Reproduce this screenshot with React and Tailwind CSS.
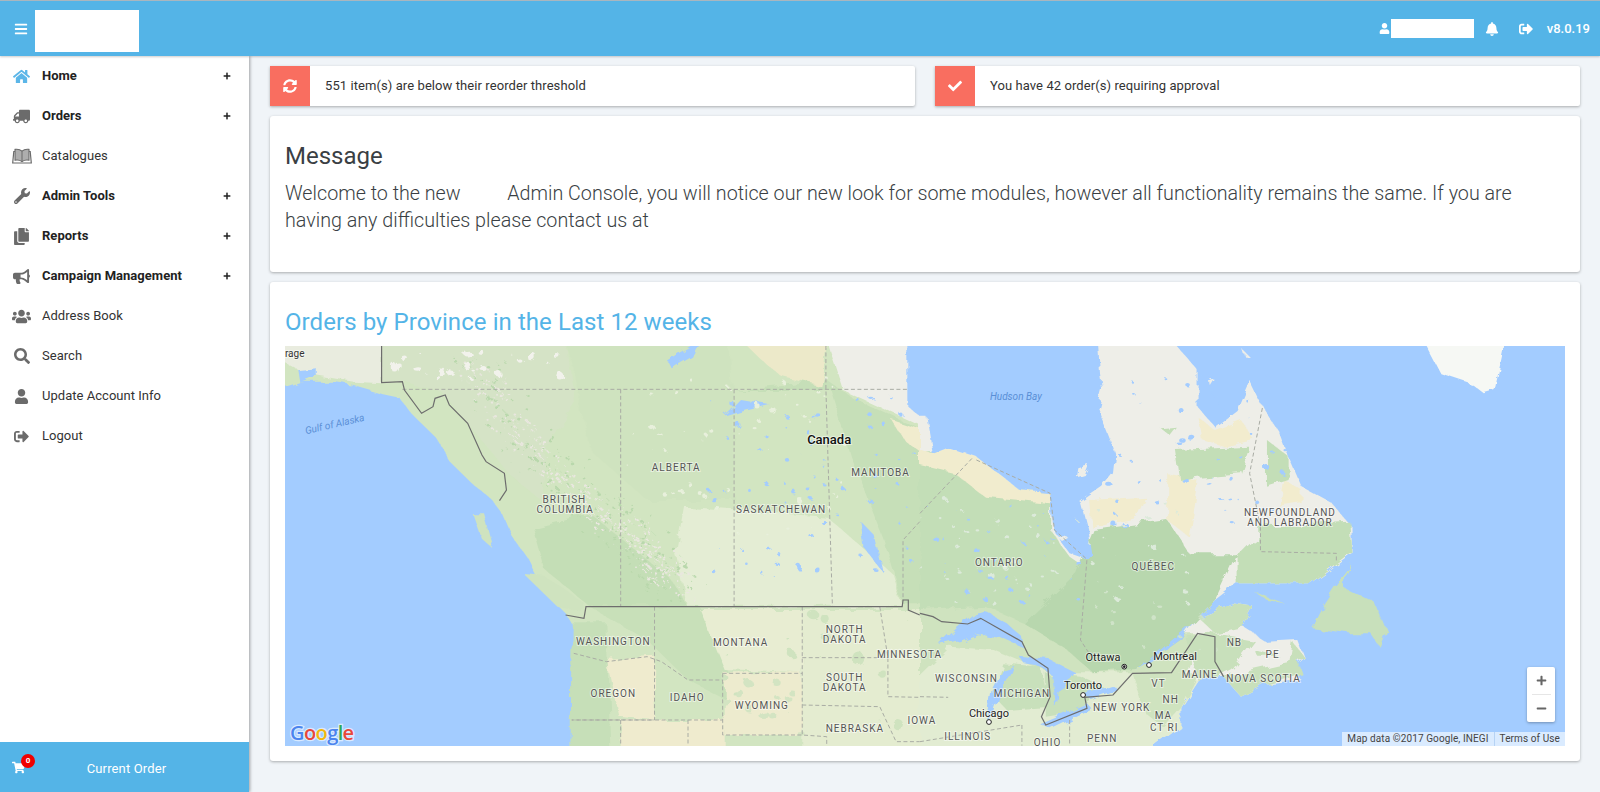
import React from 'react';
import { FaBars, FaHome, FaTruck, FaWrench, FaCopy, FaBullhorn, FaUsers, FaSearch, FaUser, FaSignOutAlt, FaSyncAlt, FaCheck, FaBell, FaShoppingCart, FaPlus, FaMinus } from 'react-icons/fa';

function BookIcon({ className }) {
  return (
    <svg viewBox="0 0 20 16" className={className} width="20" height="16" fill="none" stroke="currentColor">
      <path d="M10 3.2C8.2 1.6 5.6 1 3 1.4V12.2C5.6 11.8 8.2 12.2 10 13.6C11.8 12.2 14.4 11.8 17 12.2V1.4C14.4 1 11.8 1.6 10 3.2Z" fill="currentColor" fillOpacity="0.55" strokeWidth="1.1" />
      <path d="M10 3.2V13.6" strokeWidth="1" />
      <path d="M3 3.5H1.8L0.7 15H19.3L18.2 3.5H17" strokeWidth="1.2" />
    </svg>
  );
}

const nav = [
  { t: 'Home', I: FaHome, b: 1, c: 'text-[#5cb6e8]', s: 'text-[17px]' },
  { t: 'Orders', I: FaTruck, b: 1, flip: 1, s: 'text-[17px]' },
  { t: 'Catalogues', I: BookIcon, s: '' },
  { t: 'Admin Tools', I: FaWrench, b: 1, s: 'text-[16px]' },
  { t: 'Reports', I: FaCopy, b: 1, s: 'text-[17px]' },
  { t: 'Campaign Management', I: FaBullhorn, b: 1, s: 'text-[17px]' },
  { t: 'Address Book', I: FaUsers, s: 'text-[19px]' },
  { t: 'Search', I: FaSearch, s: 'text-[16px]' },
  { t: 'Update Account Info', I: FaUser, s: 'text-[15px]' },
  { t: 'Logout', I: FaSignOutAlt, s: 'text-[15px]' },
];

const WATER = '#a3ccff';
const W = (x, y) => [280 + x * 0.408, 340 + y / 3];
const E = (x, y) => [920 + x * 0.4337, 340 + y / 3];
const WT = 'translate(280 340) scale(0.408 0.33333)';
const ET = 'translate(920 340) scale(0.4337 0.33333)';

function specks(seed, n, x0, y0, x1, y1, fill, rMax) {
  let s = seed;
  const r = () => { s = (s * 16807) % 2147483647; return s / 2147483647; };
  const out = [];
  for (let i = 0; i < n; i++) {
    const rx = 1.5 + r() * rMax;
    out.push(<ellipse key={i} cx={x0 + r() * (x1 - x0)} cy={y0 + r() * (y1 - y0)} rx={rx} ry={rx * (0.5 + r())} fill={fill} />);
  }
  return out;
}

function along(seed, n, pts, spread, fill, rMax) {
  let s = seed;
  const r = () => { s = (s * 16807) % 2147483647; return s / 2147483647; };
  const out = [];
  for (let i = 0; i < n; i++) {
    const t = r() * (pts.length - 1);
    const k = Math.floor(t), f = t - k;
    const x = pts[k][0] + (pts[k + 1][0] - pts[k][0]) * f + (r() - 0.5) * spread;
    const y = pts[k][1] + (pts[k + 1][1] - pts[k][1]) * f + (r() - 0.5) * spread;
    out.push(<circle key={i} cx={x} cy={y} r={1 + r() * rMax} fill={fill} />);
  }
  return out;
}

const rockies = [[470, 90], [620, 330], [780, 500], [900, 620], [980, 740]];

function Label({ m, x, y, children, size = 10, ls = 1, anchor = 'middle', fill = '#555', weight = 400 }) {
  const [px, py] = m(x, y);
  return (
    <text x={px} y={py} fontSize={size} letterSpacing={ls} textAnchor={anchor} dominantBaseline="central" fill={fill} fontWeight={weight}
      fontFamily="Roboto, sans-serif" stroke="#ffffff" strokeOpacity="0.5" strokeWidth={2} paintOrder="stroke">
      {children}
    </text>
  );
}

function MapArt() {
  const vs = { vectorEffect: 'non-scaling-stroke' };
  const P = (p) => <polyline points={p} {...vs} />;
  const [gx, gy] = W(134, 252);
  return (
    <svg viewBox="285 346 1280 400" className="block w-full h-full">
      <defs>
        <filter id="rough" x="-5%" y="-5%" width="110%" height="110%">
          <feTurbulence type="fractalNoise" baseFrequency="0.06" numOctaves="4" seed="4" />
          <feDisplacementMap in="SourceGraphic" scale="10" />
          <feGaussianBlur stdDeviation="0.5" />
        </filter>
      </defs>
      <rect x="285" y="346" width="1280" height="400" fill={WATER} />
      <g filter="url(#rough)">
        <g transform={WT}>
          <polygon fill="#d2e5c1" points="0,0 1575,0 1575,1240 712,1240 715,1100 715,1000 720,930 720,860 700,820 650,760 610,660 570,590 545,520 520,480 470,430 420,370 380,290 330,230 290,170 250,160 180,135 130,125 60,125 0,150" />
          <polygon fill="#e9ecdf" points="0,0 249,0 249,130 180,125 60,100 0,60" />
          <polygon fill="#d5e3c6" points="249,0 700,0 720,200 650,330 640,480 560,400 460,250 400,160 300,125 249,128" />
          <polygon fill="#cfe3bf" points="700,0 1100,0 1110,150 1113,480 900,480 760,330" />
          <polygon fill="#e4edd4" points="990,500 1340,530 1500,700 1525,800 1000,800 970,640" />
          <polygon fill="#c6dfb8" points="1113,150 1350,150 1400,350 1480,600 1525,790 1575,790 1575,270 1400,170 1340,120" />
          <polygon fill="#ece9c9" points="1130,0 1340,0 1330,140 1230,110 1180,60" />
          <polygon fill="#eeeee8" points="1340,0 1575,0 1575,260 1470,200 1380,150" />
          <polygon fill="#f1ecce" points="1500,240 1575,270 1575,340 1530,300" />
          <polygon fill="#c4deb6" points="620,560 760,520 960,720 1000,800 760,800 650,690" />
          <polygon fill="#c8e0b9" points="760,800 1030,800 1100,1000 1130,1100 1000,1020 900,900" />
          <polygon fill="#e8edd2" points="1030,810 1280,810 1280,1000 1090,990" />
          <polygon fill="#efebce" points="800,960 920,950 918,1140 830,1130" />
          <polygon fill="#edebce" points="1090,1000 1280,1000 1280,1185 1090,1185" />
          <polygon fill="#efebce" points="835,1140 1090,1140 1090,1240 835,1240" />
          <polygon fill="#e4ecd0" points="1280,810 1575,810 1575,1240 1280,1240" />
          <polygon fill="#c6dfb8" points="715,850 800,850 810,1240 712,1240" />
          <polygon fill="#cfe3bf" points="470,520 500,520 525,630 490,590" />
          <polygon fill="#cfe3bf" points="600,705 650,710 745,790 740,815 680,800" />
          <polygon fill={WATER} points="950,60 1030,0 1010,50 960,85" />
          <polygon fill={WATER} points="1090,230 1130,180 1200,195 1130,215" />
          <polygon fill={WATER} points="1420,540 1460,590 1480,700 1430,620" />
          <polygon fill={WATER} points="45,90 90,85 90,110 50,130" />
          <polygon fill={WATER} points="1540,0 1575,0 1575,235 1540,200" />
          {along(31, 420, rockies, 90, '#e9e7df', 2.8)}
          {along(77, 240, rockies, 130, '#b9d8ac', 3.4)}
          {specks(11, 70, 1050, 170, 1560, 720, WATER, 5)}
          {specks(29, 50, 850, 100, 1400, 600, '#e8f0dc', 6)}
          {specks(41, 30, 280, 30, 700, 120, '#f2f2ec', 8)}
          {specks(53, 16, 1050, 820, 1550, 1200, '#cfe3bf', 14)}
          {specks(67, 12, 1090, 1000, 1280, 1185, '#d3e4c2', 12)}
        </g>
        <g transform={ET}>
          <polygon fill="#eeeee8" points="0,0 415,0 580,0 640,90 640,200 680,260 730,210 760,120 790,200 830,280 850,350 880,440 950,490 995,560 995,640 900,730 730,730 680,780 620,860 600,900 640,830 720,790 770,800 745,860 800,905 870,900 885,950 850,990 880,1020 800,1030 740,1070 700,1010 640,1020 600,1100 600,1160 520,1240 0,1240" />
          <polygon fill="#c3deb7" points="0,340 40,340 130,360 230,450 300,460 300,570 345,650 400,700 370,1000 290,950 235,890 140,810 0,820" />
          <polygon fill="#f1ecce" points="0,330 30,345 70,325 130,350 230,450 300,460 300,490 230,480 150,470 80,400 0,375" />
          <polygon fill="#cfe3bf" points="0,810 150,800 240,850 400,960 420,1020 0,1020" />
          <polygon fill="#cfe3bf" points="340,920 610,880 640,880 610,1010 400,1010" />
          <polygon fill="#b8d7ae" points="240,850 360,700 400,570 570,540 620,640 730,640 680,780 620,860 600,900 500,990 400,1000 340,930" />
          <polygon fill="#c3deb7" points="730,640 760,600 990,640 900,730 730,730" />
          <polygon fill="#c3deb7" points="780,560 990,545 995,640 780,640" />
          <polygon fill="#f2ecce" points="570,400 640,420 620,590 570,540" />
          <polygon fill="#f2ecce" points="840,420 880,450 880,490 830,500" />
          <polygon fill="#f2ecce" points="640,230 680,270 740,240 770,300 700,320 650,300" />
          <polygon fill="#f2ecce" points="390,480 520,470 500,530 395,560" />
          <polygon fill="#c3deb7" points="590,330 760,320 740,400 640,410 600,420" />
          <polygon fill="#c3deb7" points="800,300 850,350 850,420 800,440" />
          <polygon fill="#c3deb7" points="555,265 590,260 575,285" />
          <polygon fill="#e2ecd2" points="0,1010 70,920 170,930 300,1000 370,1000 490,1000 600,1000 640,1020 600,1100 600,1160 520,1240 0,1240" />
          <polygon fill="#c8e0bb" points="190,970 280,980 300,1100 200,1110 165,1060" />
          <polygon fill="#c8e0bb" points="290,1000 370,1010 440,1050 340,1120 290,1130" />
          <polygon fill="#cfe3bf" points="490,1000 640,1000 600,1100 560,1160 520,1120" />
          <polygon fill="#c8e0bb" points="610,890 680,880 770,900 720,990 690,1010 640,1020" />
          <polygon fill="#c8e0bb" points="640,830 720,790 770,800 745,860 680,880" />
          <polygon fill="#c8e0bb" points="700,1010 870,960 880,1000 800,1030 740,1070" />
          <polygon fill={WATER} points="0,0 410,0 415,100 420,150 410,200 440,300 450,340 445,400 420,440 370,485 385,560 395,640 385,658 345,640 305,570 300,460 230,450 130,350 70,325 30,345 15,230 0,230" />
          <polygon fill="#eeeee8" points="365,385 390,375 380,405 362,412" />
          <polygon fill="#eeeee8" points="305,575 340,590 325,600" />
          <polygon fill={WATER} points="45,915 80,870 120,825 150,815 200,850 235,890 240,925 180,890 130,880 90,900" />
          <polygon fill={WATER} points="155,1140 165,1050 190,985 215,975 195,1040 170,1130" />
          <polygon fill={WATER} points="230,950 300,960 360,1000 350,1020 315,1050 310,1100 300,1000 265,975 240,970" />
          <polygon fill={WATER} points="275,1150 385,1090 395,1105 300,1165" />
          <polygon fill={WATER} points="375,1060 440,1035 460,1050 395,1080" />
          <polygon fill={WATER} points="620,860 600,900 520,975 500,990 590,890" />
          <polygon fill="#c8e0bb" points="960,740 1000,665 975,740 1050,790 1075,870 1060,920 1040,880 990,880 905,865 930,800" />
          <polygon fill="#c8e0bb" points="770,755 840,790 800,780" />
          <polygon fill="#c8e0bb" points="770,930 830,950 780,950" />
          <polygon fill="#c8e0bb" points="860,905 885,950 850,975" />
          <polygon fill="#eeeee8" points="745,30 760,50 750,50" />
          <polygon fill="#eeeee8" points="665,110 678,115 668,135" />
          <polygon fill="#f6f8f4" points="1160,0 1350,0 1325,150 1300,160 1270,130 1200,100" />
          {specks(13, 50, 400, 100, 870, 560, WATER, 6)}
          {specks(37, 60, 0, 480, 620, 800, '#dceada', 5)}
          {specks(59, 30, 0, 440, 380, 800, WATER, 5)}
          {specks(61, 14, 400, 700, 720, 950, '#cfe3c8', 5)}
        </g>
      </g>
      <g transform={WT} fill="none" stroke="#a9aca4" strokeWidth="1" strokeDasharray="4 2.5">
        {P('300,148 1540,148')}
        {P('835,148 835,800')}
        {P('1113,148 1113,800')}
        {P('1338,18 1338,148 1354,800')}
        {P('1568,545 1527,600 1527,780')}
        {P('918,800 918,1140 715,1140 1085,1140')}
        {P('1085,1000 1280,1000')}
        {P('1085,1000 1085,1185 1280,1185 1340,1190 1340,1217')}
        {P('1280,800 1280,1185')}
        {P('1280,953 1490,953')}
        {P('1470,800 1490,953 1490,1070 1568,1072')}
        {P('1280,1095 1470,1100 1510,1205 1568,1205')}
        {P('835,1140 835,1217')}
        {P('1000,1140 1000,1217')}
        {P('720,940 800,965 900,950 935,965 1000,1020 1085,1020')}
      </g>
      <g transform={ET} fill="none" stroke="#a9aca4" strokeWidth="1" strokeDasharray="4 2.5">
        {P('0,520 120,355')}
        {P('130,360 300,460 310,570 385,658 370,900 395,950')}
        {P('785,560 785,635 960,640 960,665')}
        {P('785,560 760,400 790,200')}
        {P('0,1070 65,1072')}
        {P('235,1155 235,1217')}
        {P('345,1140 345,1217')}
        {P('0,1205 235,1155')}
      </g>
      <g transform={WT} fill="none" stroke="#6d6d6d" strokeWidth="1.2">
        {P('249,18 249,128 300,125 305,150 347,220 375,200 380,175 405,165 415,195 460,250 495,345 505,365 550,400 555,450 538,482')}
        {P('700,825 745,835 750,800 1525,800 1527,780 1540,780 1540,810 1568,825')}
      </g>
      <g transform={ET} fill="none" stroke="#6d6d6d" strokeWidth="1.2">
        {P('0,820 30,830 50,845 110,852 140,835 235,905 250,945 295,985 300,1070 280,1130 290,1155 385,1105 380,1072 445,1065 490,1000 580,998 640,880 680,890 680,965 700,1010')}
      </g>
      <Label m={W} x={36} y={40} ls={0} fill="#333">rage</Label>
      <text x={gx} y={gy} fontSize={10} fontStyle="italic" fill="#5a8fd6" fontFamily="Roboto, sans-serif" textAnchor="middle" dominantBaseline="central" transform={`rotate(-13 ${gx} ${gy})`}>Gulf of Alaska</text>
      <Label m={W} x={971} y={381}>ALBERTA</Label>
      <Label m={W} x={1472} y={396}>MANITOBA</Label>
      <Label m={W} x={1228} y={507}>SASKATCHEWAN</Label>
      <Label m={W} x={697} y={477}>BRITISH</Label>
      <Label m={W} x={699} y={507}>COLUMBIA</Label>
      <Label m={W} x={817} y={903}>WASHINGTON</Label>
      <Label m={W} x={1129} y={906}>MONTANA</Label>
      <Label m={W} x={1384} y={867}>NORTH</Label>
      <Label m={W} x={1384} y={897}>DAKOTA</Label>
      <Label m={W} x={1463} y={942} anchor="start">MINNESOTA</Label>
      <Label m={W} x={1384} y={1011}>SOUTH</Label>
      <Label m={W} x={1384} y={1041}>DAKOTA</Label>
      <Label m={W} x={817} y={1059}>OREGON</Label>
      <Label m={W} x={998} y={1071}>IDAHO</Label>
      <Label m={W} x={1181} y={1095}>WYOMING</Label>
      <Label m={W} x={1409} y={1164}>NEBRASKA</Label>
      <Label m={W} x={1538} y={1141} anchor="start">IOWA</Label>
      <Label m={W} x={1346} y={298} size={13} ls={0} fill="#111" weight={500}>Canada</Label>
      {(() => { const [x, y] = E(221, 168); return <text x={x} y={y} fontSize={10} fontStyle="italic" fill="#5a8fd6" fontFamily="Roboto, sans-serif" textAnchor="middle" dominantBaseline="central">Hudson Bay</text>; })()}
      <Label m={E} x={183} y={666}>ONTARIO</Label>
      <Label m={E} x={538} y={678}>QUÉBEC</Label>
      <Label m={E} x={853} y={516}>NEWFOUNDLAND</Label>
      <Label m={E} x={853} y={546}>AND LABRADOR</Label>
      <Label m={E} x={725} y={906}>NB</Label>
      <Label m={E} x={813} y={942}>PE</Label>
      <Label m={E} x={792} y={1014}>NOVA SCOTIA</Label>
      <Label m={E} x={645} y={1002}>MAINE</Label>
      <Label m={E} x={550} y={1030}>VT</Label>
      <Label m={E} x={578} y={1077}>NH</Label>
      <Label m={E} x={561} y={1126}>MA</Label>
      <Label m={E} x={563} y={1161}>CT RI</Label>
      <Label m={E} x={465} y={1101}>NEW YORK</Label>
      <Label m={E} x={420} y={1194}>PENN</Label>
      <Label m={E} x={294} y={1206}>OHIO</Label>
      <Label m={E} x={110} y={1188}>ILLINOIS</Label>
      <Label m={E} x={107} y={1014}>WISCONSIN</Label>
      <Label m={E} x={235} y={1059}>MICHIGAN</Label>
      <Label m={E} x={422} y={951} size={11} ls={0} fill="#222">Ottawa</Label>
      <Label m={E} x={588} y={948} size={11} ls={0} fill="#222">Montreal</Label>
      <Label m={E} x={376} y={1036} size={11} ls={0} fill="#222">Toronto</Label>
      <Label m={E} x={159} y={1120} size={11} ls={0} fill="#222">Chicago</Label>
      {[[471, 980], [528, 975], [376, 1065], [159, 1146]].map(([x, y], i) => {
        const [cx, cy] = E(x, y);
        return (
          <g key={i}>
            <circle cx={cx} cy={cy} r={2.4} fill="#fff" stroke="#222" strokeWidth={1} />
            {i === 0 ? <circle cx={cx} cy={cy} r={1.3} fill="#222" /> : null}
          </g>
        );
      })}
      <text x={290} y={740} fontSize={20} fontFamily="'Open Sans', sans-serif" fontWeight={600} stroke="#ffffff" strokeOpacity="0.6" strokeWidth={2.5} paintOrder="stroke" letterSpacing={-0.6}>
        <tspan fill="#4a84ee">G</tspan><tspan fill="#e9463a">o</tspan><tspan fill="#f2b70f">o</tspan><tspan fill="#4a84ee">g</tspan><tspan fill="#35a853">l</tspan><tspan fill="#e9463a">e</tspan>
      </text>
    </svg>
  );
}

function Alert({ Icon, text }) {
  return (
    <div className="flex-1 h-10 flex items-center bg-white rounded-r-[2px] shadow-[0_1px_3px_rgba(0,0,0,0.3)]">
      <div className="w-10 h-10 bg-[#f96e60] flex items-center justify-center text-white text-[14px]"><Icon /></div>
      <div className="pl-[15px] text-[13px] tracking-[0.08px] text-[#333]">{text}</div>
    </div>
  );
}

export default function App() {
  return (
    <div className="h-[792px] w-[1600px] overflow-hidden flex flex-col bg-[#f0f4f8] font-['Roboto',sans-serif]">
      <header className="h-[56px] shrink-0 border-t border-[#a9b6bf] bg-[#54b4e7] flex items-center text-white relative z-20 shadow-[0_1px_2px_rgba(0,0,0,0.2)]">
        <FaBars className="ml-[14px] text-[14px]" />
        <div className="ml-[7px] w-[104px] h-[42px] mt-[5px] bg-white" />
        <div className="ml-auto flex items-center mr-[10px]">
          <FaUser className="text-[11px]" />
          <div className="w-[83px] h-[19px] ml-[1px] bg-white" />
          <FaBell className="ml-[11px] text-[14px]" />
          <FaSignOutAlt className="ml-[20px] text-[14px]" />
          <span className="ml-[14px] text-[13px] font-medium">v8.0.19</span>
        </div>
      </header>
      <div className="flex-1 flex min-h-0">
        <aside className="w-[249px] shrink-0 bg-white flex flex-col justify-between shadow-[1px_0_3px_rgba(0,0,0,0.35)] z-10">
          <nav>
            {nav.map(({ t, I, b, c, flip, s }) => (
              <div key={t} className="h-10 flex items-center text-[13px] text-[#333] tracking-[0.03px]">
                <div className="w-[42px] flex justify-center pl-[1px] shrink-0">
                  <I className={`${s} ${c || 'text-[#6b6b6b]'} ${flip ? '-scale-x-100' : ''}`} />
                </div>
                <span className={b ? 'font-bold text-[#222] flex-1' : 'flex-1'}>{t}</span>
                {b ? <FaPlus className="text-[8px] mr-[18px] text-[#222]" /> : null}
              </div>
            ))}
          </nav>
          <div className="h-[50px] bg-[#54b4e7] text-white flex items-center relative">
            <FaShoppingCart className="ml-[12px] text-[13px] mt-[1px]" />
            <span className="absolute left-[21px] top-[12px] w-[14px] h-[14px] rounded-full bg-[#f00000] text-[8px] font-bold flex items-center justify-center">0</span>
            <span className="flex-1 text-center text-[13px] tracking-[0.15px] pr-[21px] pt-[3px]">Current Order</span>
          </div>
        </aside>
        <main className="flex-1 pl-[21px] pr-[20px] pt-[10px] flex flex-col gap-[10px] min-w-0">
          <div className="flex gap-[20px]">
            <Alert Icon={FaSyncAlt} text="551 item(s) are below their reorder threshold" />
            <Alert Icon={FaCheck} text="You have 42 order(s) requiring approval" />
          </div>
          <section className="h-[156px] bg-white rounded-[3px] shadow-[0_1px_3px_rgba(0,0,0,0.3)] px-[15px] pt-[27px] text-[#3a3f44]">
            <h2 className="text-[24px] leading-[26px] font-normal">Message</h2>
            <p className="mt-[11px] text-[19.72px] leading-[27px] font-light">
              Welcome to the new <span className="inline-block w-[37px]" /> Admin Console, you will notice our new look for some modules, however all functionality remains the same. If you are having any difficulties please contact us at
            </p>
          </section>
          <section className="h-[479px] bg-white rounded-[3px] shadow-[0_1px_3px_rgba(0,0,0,0.3)] px-[15px] pt-[26px]">
            <h2 className="text-[24px] leading-[28px] text-[#54b4e7] font-normal tracking-[0.07px]">Orders by Province in the Last 12 weeks</h2>
            <div className="mt-[10px] relative h-[400px] overflow-hidden">
              <MapArt />
              <div className="absolute left-[1242px] top-[321px] w-[28px] h-[55px] bg-white rounded-[2px] shadow-[0_1px_3px_rgba(0,0,0,0.3)] flex flex-col items-center text-[#666]">
                <div className="h-[27px] flex items-center justify-center text-[11px]"><FaPlus /></div>
                <div className="w-[19px] h-px bg-[#e6e6e6]" />
                <div className="flex-1 flex items-center justify-center text-[11px]"><FaMinus /></div>
              </div>
              <div className="absolute right-0 bottom-0 h-[14px] flex items-center text-[10px] tracking-[0.1px] text-[#444] bg-[rgba(255,255,255,0.6)]">
                <span className="px-[5px] leading-[14px]">Map data ©2017 Google, INEGI</span>
                <span className="px-[5px] leading-[14px] border-l border-[#b6d3f5]">Terms of Use</span>
              </div>
            </div>
          </section>
        </main>
      </div>
    </div>
  );
}
